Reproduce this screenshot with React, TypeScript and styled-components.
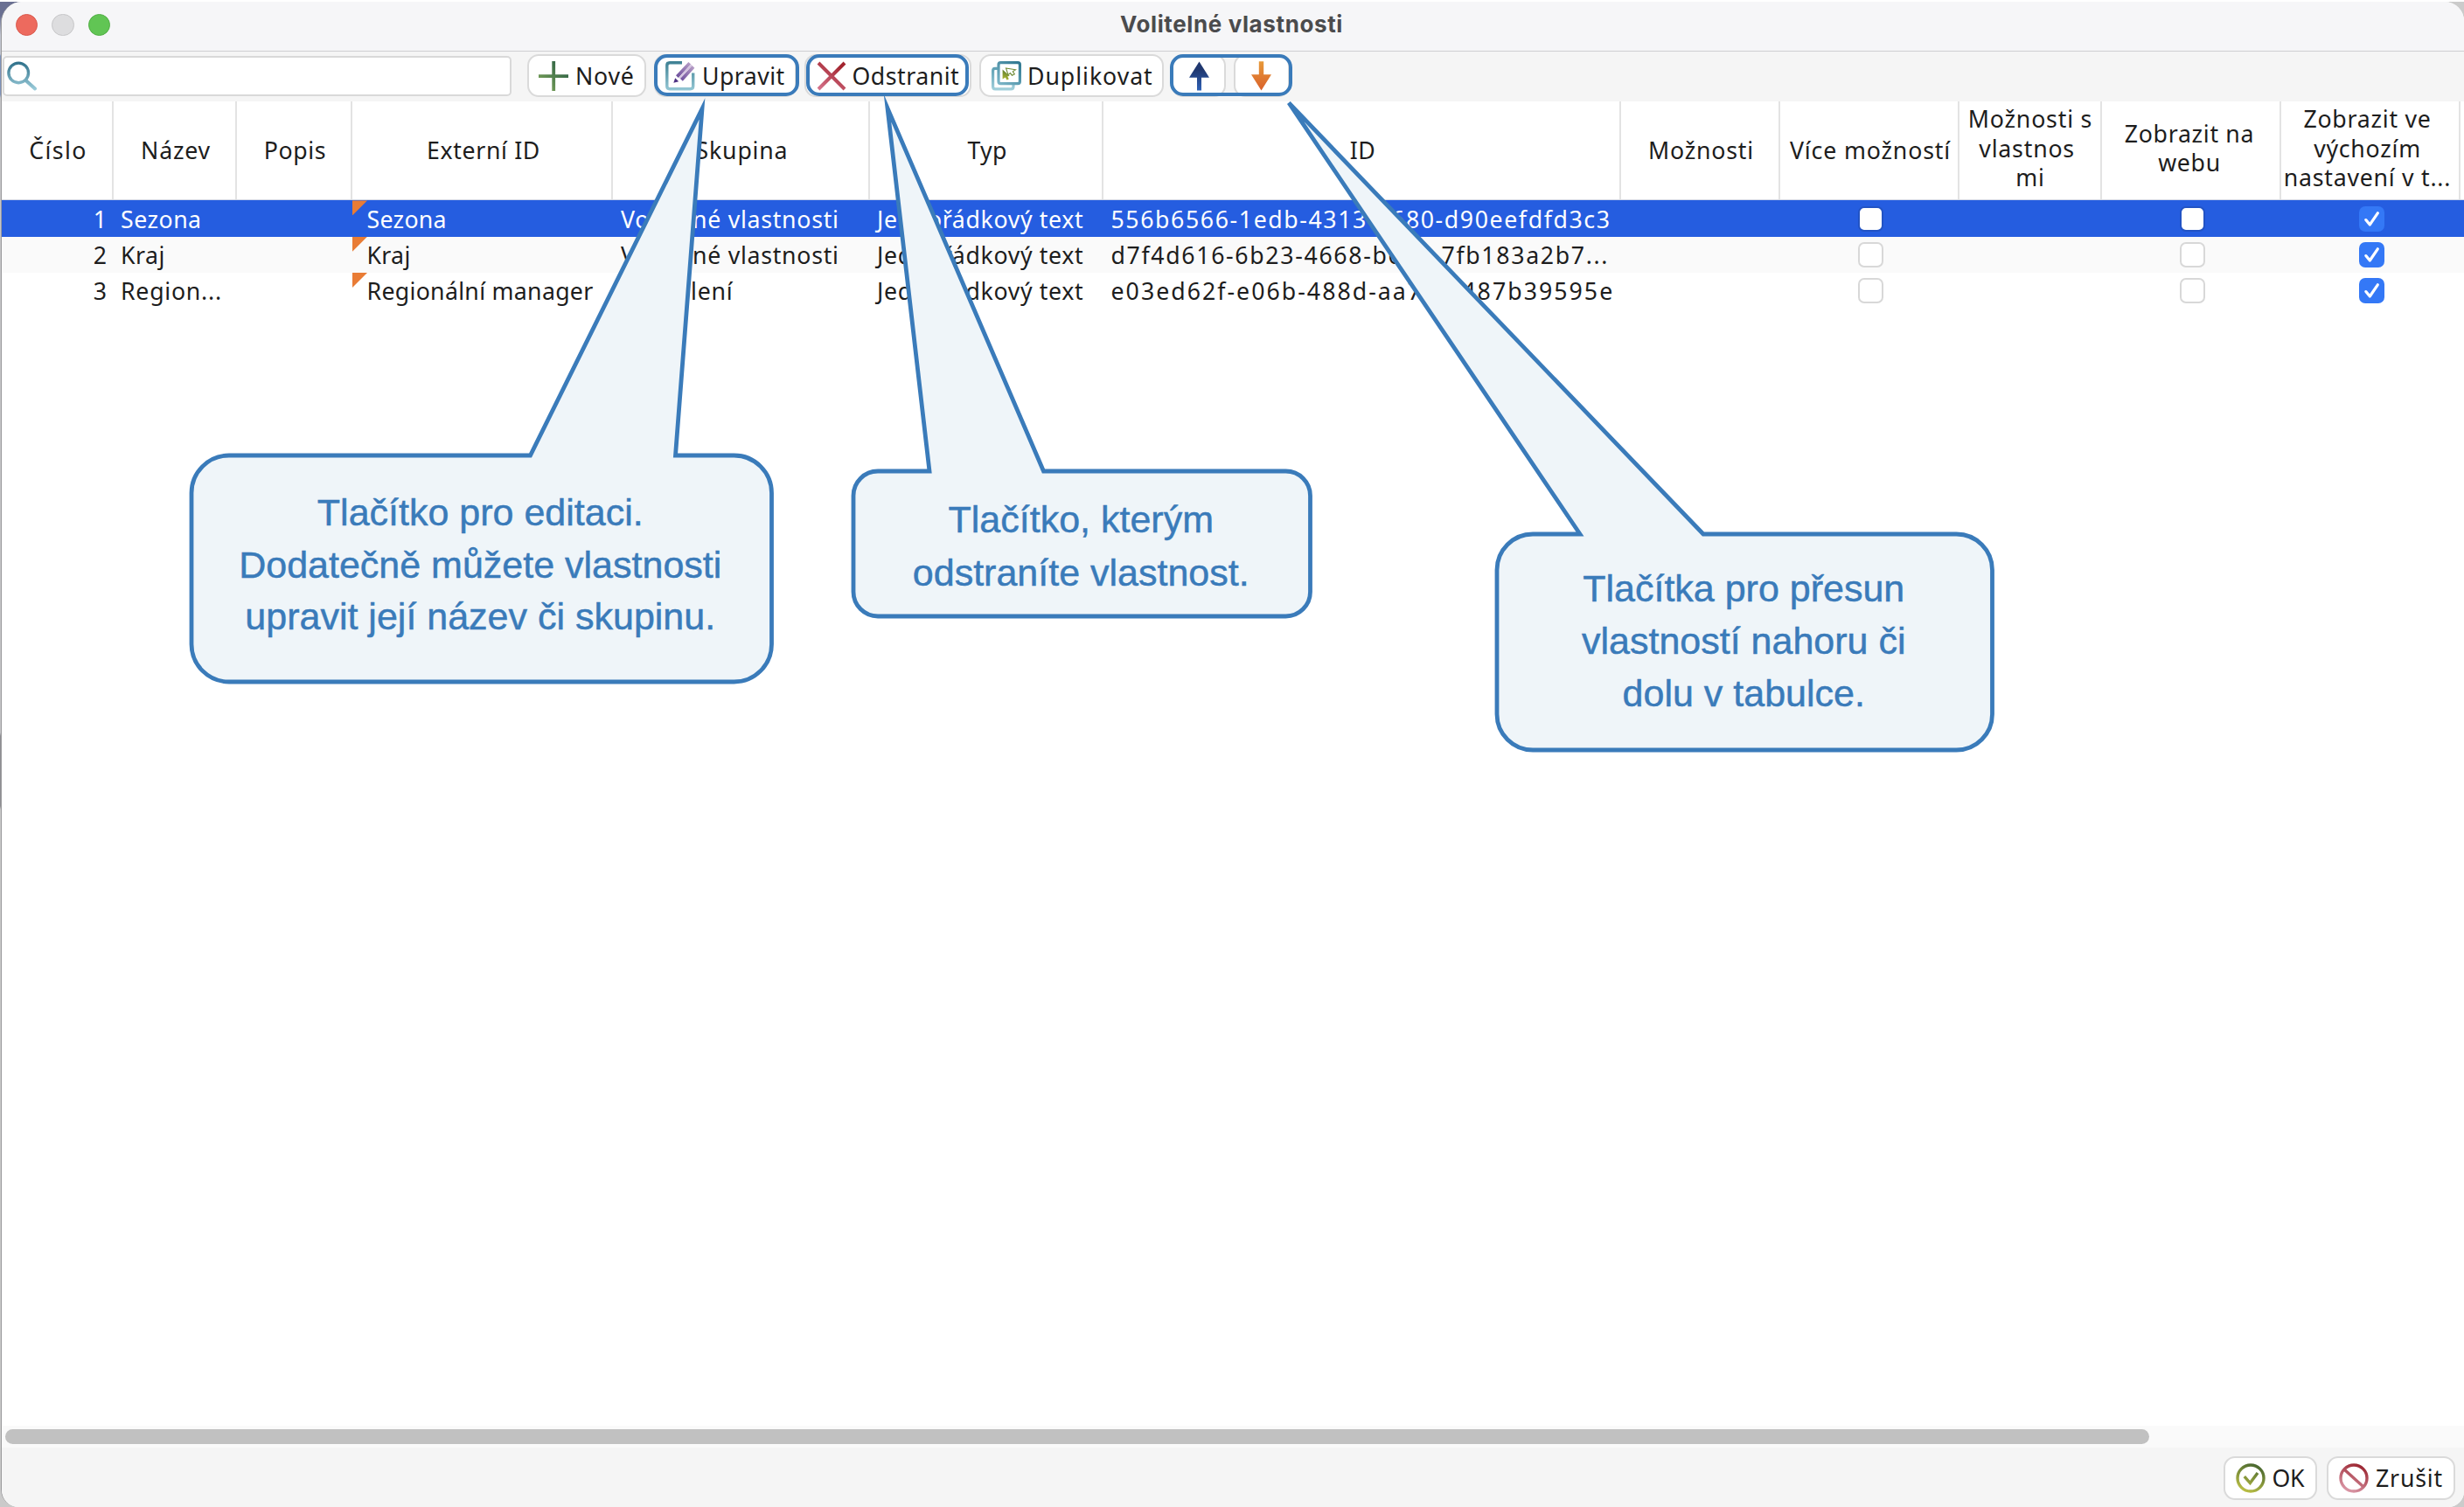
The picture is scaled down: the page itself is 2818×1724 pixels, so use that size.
import React from "react";
import styled, { createGlobalStyle } from "styled-components";

const UI_FONT = `"Noto Sans", "Open Sans", sans-serif`;
const BLUE = "#3a7bba";

const GlobalStyle = createGlobalStyle`
  *, *::before, *::after { box-sizing: border-box; }
  body { margin: 0; background: #fff; }
`;

/* ---------- window frame ---------- */

const Desktop = styled.div`
  position: relative;
  width: 2818px;
  height: 1724px;
  overflow: hidden;
  padding-top: 2px;
  background:
    linear-gradient(#fff, #fff) 0 0 / 100% 2px no-repeat,
    linear-gradient(#6a7092 0 18px, #c3c6d0 40px 62px, #7f93bb 64px 108px, #c6c6c8 112px 838px, #8f8f93 842px 922px, #cacaca 926px) 0 0 / 26px 100% no-repeat,
    #cbcbcb;
`;

const Window = styled.main`
  display: flex;
  flex-direction: column;
  height: 1722px;
  margin-left: 1px;
  border-left: 1px solid #9b9b9d;
  border-radius: 24px 22px 18px 20px;
  overflow: hidden;
  background: #fff;
  color: #1d1d1d;
  font-family: ${UI_FONT};
  font-size: 26.7px;
`;

const TitleBar = styled.header`
  display: grid;
  grid-template-columns: 1fr auto 1fr;
  align-items: center;
  height: 57px;
  flex: none;
  padding: 0 3px 4px 0;
  background: #f6f6f8;
  border-bottom: 1px solid #cfcfd1;
`;

const Lights = styled.div`
  display: flex;
  gap: 16px;
  padding: 1px 0 0 16px;
`;

const Light = styled.span<{ $fill: string; $edge: string }>`
  width: 25.4px;
  height: 25.4px;
  border-radius: 50%;
  background: ${(p) => p.$fill};
  border: 1px solid ${(p) => p.$edge};
`;

const Title = styled.h1`
  margin: 0;
  font: 700 26px/34px Inter, "Liberation Sans", sans-serif;
  letter-spacing: 0.62px;
  color: #4b4b4d;
`;

/* ---------- toolbar ---------- */

const Toolbar = styled.div`
  display: flex;
  align-items: flex-start;
  height: 57px;
  flex: none;
  padding: 3px 0 0 1px;
  background: #f5f5f5;
`;

const SearchBox = styled.label`
  display: flex;
  align-items: center;
  width: 582px;
  height: 46px;
  margin: 2px 18px 0 0;
  padding-left: 3px;
  background: #fff;
  border: 2px solid #d9d9d9;
  border-radius: 5px;
`;

const SearchInput = styled.input`
  flex: 1;
  min-width: 0;
  border: 0;
  outline: 0;
  background: none;
  font: inherit;
`;

const ButtonRow = styled.div`
  display: flex;
  gap: 9px;
`;

const Button = styled.button<{ $w: number; $pad?: number; $gap?: number; $ls?: number; $h?: number }>`
  display: flex;
  align-items: center;
  width: ${(p) => p.$w}px;
  height: ${(p) => p.$h ?? 49}px;
  padding: 0 0 0 ${(p) => p.$pad ?? 11}px;
  gap: ${(p) => p.$gap ?? 8}px;
  background: #fff;
  border: 2px solid #dadada;
  border-radius: 13px;
  color: inherit;
  font-family: inherit;
  font-size: 26.7px;
  line-height: 36px;
  letter-spacing: ${(p) => p.$ls ?? 0.6}px;
  white-space: nowrap;

  svg { flex: none; display: block; }
`;

const Highlight = styled.div<{ $l: number; $r: number }>`
  position: relative;
  display: flex;
  gap: 9px;

  &::after {
    content: "";
    position: absolute;
    top: 0;
    bottom: 1px;
    left: ${(p) => p.$l}px;
    right: ${(p) => p.$r}px;
    border: 4px solid ${BLUE};
    border-radius: 15px;
  }
`;

/* ---------- table ---------- */

const COLUMNS = "128px 141px 132px 298px 294px 267px 592px 182px 205px 163px 205px 205px 1fr";

const Table = styled.section`
  flex: 1;
  min-height: 0;
  background: #fff;
`;

const HeadRow = styled.div`
  display: grid;
  grid-template-columns: ${COLUMNS};
  height: 113.4px;
  border-bottom: 1px solid #d3d8e4;
`;

const HeadCell = styled.div<{ $lines: number; $ls: number; $dx?: number }>`
  display: flex;
  flex-direction: column;
  align-items: center;
  justify-content: center;
  padding: 0 ${(p) => Math.max(0, -(p.$dx ?? 2))}px ${(p) => (p.$lines > 1 ? 6 : 1)}px ${(p) => Math.max(0, p.$dx ?? 3)}px;
  border-right: 2px solid #e3e3e3;
  line-height: 33.2px;
  letter-spacing: ${(p) => p.$ls}px;
  white-space: pre;

  &:last-child { border-right: 0; }
`;

const BodyRow = styled.div<{ $kind: "selected" | "even" | "odd" }>`
  display: grid;
  grid-template-columns: ${COLUMNS};
  height: 41.33px;
  background: ${(p) => ({ selected: "#255de0", even: "#fafafa", odd: "#ffffff" })[p.$kind]};
  color: ${(p) => (p.$kind === "selected" ? "#fff" : "inherit")};
`;

const Cell = styled.div<{ $pad?: number; $ls?: number; $align?: string }>`
  position: relative;
  display: flex;
  align-items: center;
  justify-content: ${(p) => p.$align ?? "flex-start"};
  padding: 0 ${(p) => (p.$align === "flex-end" ? 7.5 : 0)}px 0 ${(p) => p.$pad ?? 0}px;
  letter-spacing: ${(p) => p.$ls ?? 0.5}px;
  line-height: 41px;
  white-space: nowrap;
`;

const Flag = styled.span`
  position: absolute;
  left: 0;
  top: 0;
  width: 17px;
  height: 17px;
  background: #e97c35;
  clip-path: polygon(0 0, 100% 0, 0 100%);
`;

const Box = styled.span<{ $on?: boolean; $sel?: boolean }>`
  display: flex;
  width: 29px;
  height: 29px;
  margin-left: 2px;
  border-radius: 7px;
  background: ${(p) => (p.$on ? "#3478f6" : "#fff")};
  border: ${(p) => (p.$on ? "0" : p.$sel ? "2px solid #2253c4" : "2px solid #d8d8d8")};
`;

/* ---------- scrollbar and footer ---------- */

const ScrollTrack = styled.div`
  flex: none;
  height: 25px;
  padding: 4px 0 0 4px;
  background: #fafafa;
`;

const ScrollThumb = styled.div`
  width: 2452px;
  height: 17px;
  border-radius: 9px;
  background: #c1c1c1;
`;

const Footer = styled.footer`
  display: flex;
  justify-content: flex-end;
  gap: 11px;
  flex: none;
  height: 68px;
  padding: 10px 10px 0 0;
  background: #f5f5f5;
`;

/* ---------- annotations ---------- */

const Bubble = styled.aside<{ $x: number; $y: number; $w: number; $h: number; $shift: number; $lh: number }>`
  position: absolute;
  left: ${(p) => p.$x}px;
  top: ${(p) => p.$y}px;
  width: ${(p) => p.$w}px;
  height: ${(p) => p.$h}px;
  display: flex;
  flex-direction: column;
  align-items: center;
  justify-content: center;
  padding-right: 2px;
  color: ${BLUE};
  font: 43px/${(p) => p.$lh}px "Liberation Sans", Arial, sans-serif;
  white-space: nowrap;

  svg { position: absolute; left: 0; top: 0; overflow: visible; }
  p { position: relative; top: ${(p) => p.$shift}px; margin: 0; text-align: center; -webkit-text-stroke: 0.5px ${BLUE}; }
`;

type CalloutProps = {
  x: number; y: number; w: number; h: number; r: number;
  base: [number, number]; tip: [number, number];
  shift: number; lh: number; lines: string[];
};

function Callout({ x, y, w, h, r, base, tip, shift, lh, lines }: CalloutProps) {
  const d = `M${r} 0H${base[0] - x}L${tip[0] - x} ${tip[1] - y}L${base[1] - x} 0H${w - r}A${r} ${r} 0 0 1 ${w} ${r}V${h - r}A${r} ${r} 0 0 1 ${w - r} ${h}H${r}A${r} ${r} 0 0 1 0 ${h - r}V${r}A${r} ${r} 0 0 1 ${r} 0Z`;
  return (
    <Bubble $x={x} $y={y} $w={w} $h={h} $shift={shift} $lh={lh}>
      <svg width={w} height={h}>
        <path d={d} fill="#eff5f9" stroke={BLUE} strokeWidth="4.8" strokeMiterlimit={8} />
      </svg>
      {lines.map((l) => <p key={l}>{l}</p>)}
    </Bubble>
  );
}

/* ---------- icons ---------- */

type Stop = [string, string];
const Grad = ({ id, c, dir = [1, 0, 0, 1] }: { id: string; c: Stop; dir?: number[] }) => (
  <linearGradient id={id} gradientUnits="userSpaceOnUse" x1={dir[0] * 34} y1={dir[1] * 34} x2={dir[2] * 34} y2={dir[3] * 34}>
    <stop offset="0" stopColor={c[0]} />
    <stop offset="1" stopColor={c[1]} />
  </linearGradient>
);

const SearchIcon = () => (
  <svg width="36" height="34" viewBox="0 0 36 34" fill="none" stroke="url(#gs)">
    <Grad id="gs" c={["#2b6d87", "#9acbd9"]} dir={[0.3, 0, 0.3, 0.95]} />
    <circle cx="13.2" cy="13.4" r="11.3" strokeWidth="3.4" />
    <path d="M21.5 22L32 31.4" strokeWidth="4" strokeLinecap="round" />
  </svg>
);

const PlusIcon = () => (
  <svg width="34" height="34" viewBox="0 0 34 34" fill="none" stroke="url(#gp)" strokeWidth="3.8">
    <Grad id="gp" c={["#1f5541", "#86ac5c"]} />
    <path d="M17.2 0V34M0 17.2H34" />
  </svg>
);

const EditIcon = () => (
  <svg width="34" height="34" viewBox="0 0 34 34" fill="none">
    <Grad id="ge" c={["#3c7f92", "#97c9d6"]} dir={[0.5, 0, 0.5, 1]} />
    <Grad id="gv" c={["#b9a0c8", "#583891"]} dir={[0.9, 0.1, 0.3, 0.7]} />
    <path d="M19 1.8H5Q1.8 1.8 1.8 5V28.5Q1.8 31.7 5 31.7H28.5Q31.7 31.7 31.7 28.5V13.5" stroke="url(#ge)" strokeWidth="3.4" />
    <path d="M13.4 17.6L27.8 2.2M18.4 21.4L32 6.4" stroke="url(#gv)" strokeWidth="3.8" />
    <path d="M16 19.5L29.9 4.3" stroke="#cdbbdb" strokeWidth="1.4" />
    <path d="M9.3 24.8L11.2 19.2L15.2 23.2Z" fill="#4d3183" />
  </svg>
);

const CrossIcon = () => (
  <svg width="34" height="34" viewBox="0 0 34 34" fill="none" stroke="url(#gx)" strokeWidth="4">
    <Grad id="gx" c={["#a3242f", "#d87790"]} dir={[0.7, 0.1, 0.1, 1]} />
    <path d="M2 2L32 32M32 2L2 32" />
  </svg>
);

const CopyIcon = () => (
  <svg width="34" height="34" viewBox="0 0 34 34" fill="none">
    <Grad id="gb" c={["#5d9fb3", "#a5d2dd"]} dir={[0, 0.2, 0, 1]} />
    <Grad id="gf" c={["#2f7790", "#7cb6c8"]} dir={[0.9, 0, 0.3, 0.8]} />
    <Grad id="gl" c={["#5c7d2c", "#b8bd35"]} dir={[0.5, 0.3, 0.4, 0.65]} />
    <path d="M7 8.3H4Q1.6 8.3 1.6 11V29Q1.6 31.9 4.3 31.9H22Q25 31.9 25 29V26.5" stroke="url(#gb)" strokeWidth="3.2" />
    <rect x="8" y="1.6" width="24.4" height="24" rx="2.4" stroke="url(#gf)" strokeWidth="3.2" />
    <path d="M12.6 9.6L20.8 17L18.3 17.3L19.8 20.5L17.4 21.4L15.9 18.4L12.6 20.4Z" fill="url(#gl)" />
    <path d="M16.5 8L27.5 9.8L24.3 11.9L26.3 14.8L23.4 16.2L21.4 13.6L19 15.6Z" stroke="#6f8a35" strokeWidth="1.1" />
  </svg>
);

const UpIcon = () => (
  <svg width="23" height="34" viewBox="0 0 23 34">
    <Grad id="gu" c={["#203870", "#2f62b8"]} dir={[0, 0.3, 0, 1]} />
    <path d="M11.5 0.5L23 18.8H14V33.5H9V18.8H0Z" fill="url(#gu)" />
  </svg>
);

const DownIcon = () => (
  <svg width="23" height="34" viewBox="0 0 23 34">
    <Grad id="gd" c={["#e79a3a", "#d9602b"]} dir={[0, 0, 0, 1]} />
    <path d="M11.5 33.5L0 15.2H8.8V0.2H14.2V15.2H23Z" fill="url(#gd)" />
  </svg>
);

const OkIcon = () => (
  <svg width="34" height="34" viewBox="0 0 34 34" fill="none" stroke="url(#gk)" strokeWidth="3.4">
    <Grad id="gk" c={["#43632f", "#c3c546"]} dir={[0.7, 0, 0.25, 1]} />
    <circle cx="17" cy="17" r="15" />
    <path d="M9.8 15.2L16.4 22.6L25 11" />
  </svg>
);

const CancelIcon = () => (
  <svg width="34" height="34" viewBox="0 0 34 34" fill="none" stroke="url(#gc)" strokeWidth="3.4">
    <Grad id="gc" c={["#98202b", "#dfa0b0"]} dir={[0.7, 0, 0.25, 1]} />
    <circle cx="17" cy="17" r="15" />
    <path d="M6.5 7.5L27.5 26.5" />
  </svg>
);

const Tick = () => (
  <svg width="29" height="29" viewBox="0 0 29 29" fill="none" stroke="#fff" strokeWidth="3.2" strokeLinecap="round" strokeLinejoin="round">
    <path d="M7.8 15.6L12.3 21L21.3 7.8" />
  </svg>
);

/* ---------- data ---------- */

const heads: { lines: string[]; ls: number; dx?: number }[] = [
  { lines: ["Číslo"], ls: 1.4 },
  { lines: ["Název"], ls: 0.8 },
  { lines: ["Popis"], ls: 0.6 },
  { lines: ["Externí ID"], ls: 0.65, dx: 4 },
  { lines: ["Skupina"], ls: 0.8 },
  { lines: ["Typ"], ls: 0.3 },
  { lines: ["ID"], ls: 0.5 },
  { lines: ["Možnosti"], ls: 0.8 },
  { lines: ["Více možností"], ls: 0.85 },
  { lines: ["Možnosti s", "vlastnos ", "mi"], ls: 0.8, dx: 1 },
  { lines: ["Zobrazit na", "webu"], ls: 0.7, dx: -3 },
  { lines: ["Zobrazit ve", "výchozím", "nastavení v t..."], ls: 0.75, dx: -6 },
  { lines: [], ls: 0 },
];

const rows = [
  { n: 1, name: "Sezona", ext: "Sezona", group: "Volitelné vlastnosti", id: "556b6566-1edb-4313-8680-d90eefdfd3c3", ls: 1.6 },
  { n: 2, name: "Kraj", ext: "Kraj", group: "Volitelné vlastnosti", id: "d7f4d616-6b23-4668-b680-7fb183a2b7...", ls: 1.66 },
  { n: 3, name: "Region...", ext: "Regionální manager", group: "Rozdělení", id: "e03ed62f-e06b-488d-aa78-3487b39595e", ls: 2.03 },
];

const callouts: CalloutProps[] = [
  { x: 218.5, y: 520.5, w: 663.5, h: 259, r: 43, base: [606, 772], tip: [802.5, 124], shift: -3.9, lh: 59.2,
    lines: ["Tlačítko pro editaci.", "Dodatečně můžete vlastnosti", "upravit její název či skupinu."] },
  { x: 976, y: 539.3, w: 522.5, h: 166, r: 28, base: [1063, 1193.5], tip: [1015, 124], shift: 2.3, lh: 60.3,
    lines: ["Tlačítko, kterým", "odstraníte vlastnost."] },
  { x: 1712, y: 611.3, w: 566.5, h: 247, r: 41, base: [1807, 1948], tip: [1474, 118], shift: -2, lh: 60,
    lines: ["Tlačítka pro přesun", "vlastností nahoru či", "dolu v tabulce."] },
];

export default function App() {
  return (
    <Desktop>
      <GlobalStyle />
      <Window>
        <TitleBar>
          <Lights>
            <Light $fill="#ed6a5e" $edge="#d9594d" />
            <Light $fill="#dddddf" $edge="#c6c6c8" />
            <Light $fill="#61c554" $edge="#52ae46" />
          </Lights>
          <Title>Volitelné vlastnosti</Title>
        </TitleBar>

        <Toolbar>
          <SearchBox>
            <SearchIcon />
            <SearchInput aria-label="search" />
          </SearchBox>
          <ButtonRow>
            <Button $w={136} $pad={11} $gap={8} $ls={0.8}><PlusIcon />Nové</Button>
            <Highlight $l={0} $r={-3}>
              <Button $w={163} $pad={11} $gap={8} $ls={0.45}><EditIcon />Upravit</Button>
            </Highlight>
            <Highlight $l={2} $r={3}>
              <Button $w={191} $pad={11.5} $gap={7} $ls={0.5}><CrossIcon />Odstranit</Button>
            </Highlight>
            <Button $w={211} $pad={12} $gap={7} $ls={0.95}><CopyIcon />Duplikovat</Button>
            <Highlight $l={-2} $r={-3}>
              <Button $w={62} $pad={18}><UpIcon /></Button>
              <Button $w={64} $pad={18}><DownIcon /></Button>
            </Highlight>
          </ButtonRow>
        </Toolbar>

        <Table>
          <HeadRow>
            {heads.map((h, i) => (
              <HeadCell key={i} $lines={h.lines.length} $ls={h.ls} $dx={h.dx}>
                {h.lines.map((l) => <span key={l}>{l}</span>)}
              </HeadCell>
            ))}
          </HeadRow>
          {rows.map((r) => {
            const sel = r.n === 1;
            return (
              <BodyRow key={r.n} $kind={sel ? "selected" : r.n === 2 ? "even" : "odd"}>
                <Cell $align="flex-end">{r.n}</Cell>
                <Cell $pad={8} $ls={r.n === 3 ? 0.75 : 0.5}>{r.name}</Cell>
                <Cell />
                <Cell $pad={16.5} $ls={0.3}><Flag />{r.ext}</Cell>
                <Cell $pad={9} $ls={0.72}>{r.group}</Cell>
                <Cell $pad={8} $ls={0.66}>Jednořádkový text</Cell>
                <Cell $pad={8.5} $ls={r.ls}>{r.id}</Cell>
                <Cell />
                <Cell $align="center"><Box $sel={sel} /></Cell>
                <Cell />
                <Cell $align="center"><Box $sel={sel} /></Cell>
                <Cell $align="center"><Box $on><Tick /></Box></Cell>
                <Cell />
              </BodyRow>
            );
          })}
        </Table>

        <ScrollTrack><ScrollThumb /></ScrollTrack>
        <Footer>
          <Button $w={107} $h={50} $pad={12} $gap={7.5} $ls={-0.3}><OkIcon />OK</Button>
          <Button $w={147} $h={50} $pad={12} $gap={8} $ls={0.8}><CancelIcon />Zrušit</Button>
        </Footer>
      </Window>

      {callouts.map((c) => <Callout key={c.x} {...c} />)}
    </Desktop>
  );
}
